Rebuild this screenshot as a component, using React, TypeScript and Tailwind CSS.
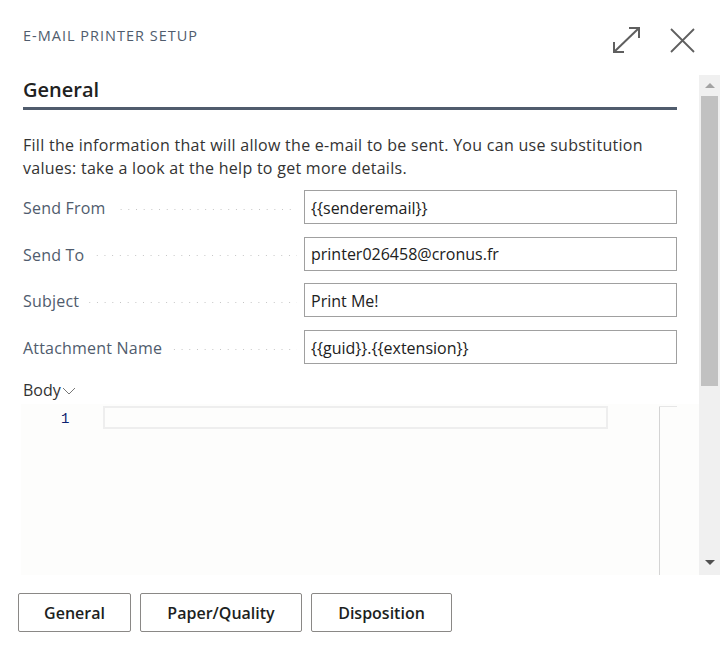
import React from "react";

const fields = [
  { label: "Send From", value: "{{senderemail}}" },
  { label: "Send To", value: "printer026458@cronus.fr" },
  { label: "Subject", value: "Print Me!" },
  { label: "Attachment Name", value: "{{guid}}.{{extension}}" },
];

export default function App() {
  return (
    <div
      className="w-[720px] h-[650px] bg-white overflow-hidden flex flex-col text-[#212121]"
      style={{ fontFamily: '"Open Sans", "Noto Sans", sans-serif' }}
    >
      {/* Header */}
      <div className="h-[75px] shrink-0 flex items-start pl-[23px] pr-[25px]">
        <div className="mt-[26px] text-[14.5px] leading-[20px] tracking-[1px] text-[#505c6d] uppercase">
          E-mail Printer Setup
        </div>
        <div className="ml-auto mt-[26px] flex items-start gap-[29px]">
          <svg width="29" height="28" viewBox="0 0 29 28" fill="none" stroke="#5f5f5f" strokeWidth="2">
            <path d="M2 26 L27 2" />
            <path d="M17 2 H27 V12" />
            <path d="M2 16 V26 H12" />
          </svg>
          <svg width="25" height="25" viewBox="0 0 25 25" fill="none" stroke="#5f5f5f" strokeWidth="1.8" className="mt-[2px]">
            <path d="M1 1 L24 24 M24 1 L1 24" />
          </svg>
        </div>
      </div>

      {/* Scroll area */}
      <div className="h-[500px] shrink-0 flex">
        <div className="flex-1 flex flex-col pl-[23px] pr-[22px] min-w-0">
          <div className="pt-[1px] h-[29px] text-[20px] leading-[28px] font-semibold text-[#212121]">General</div>
          <div className="mt-[3px] h-[3px] bg-[#505c6d]" />
          <p className="mt-[24px] text-[16px] leading-[23px] tracking-[0.28px] text-[#333333]">
            Fill the information that will allow the e-mail to be sent. You can use substitution
            <br />
            values: take a look at the help to get more details.
          </p>
          <div className="mt-[10px] flex flex-col gap-[12.7px]">
            {fields.map((f) => (
              <div key={f.label} className="flex items-center h-[34px]">
                <span className="pt-[2px] text-[16px] tracking-[0.2px] text-[#505c6d] whitespace-nowrap">{f.label}</span>
                <span className="flex-1 ml-[10px] mr-[7px] mt-[4px] h-[1px] bg-[linear-gradient(to_right,#c4c4c4_1px,transparent_1px)] bg-[length:7.7px_1px] bg-repeat-x bg-right" />
                <div className="w-[373px] h-[34px] border border-[#a0a0a0] flex items-center px-[6px] pt-[1px] text-[16px] text-[#212121] whitespace-nowrap">
                  {f.value}
                </div>
              </div>
            ))}
          </div>
          <div className="mt-[14px] h-[22px] flex items-center text-[16px] text-[#333333]">
            <span className="pt-[1px]">Body</span>
            <svg width="14" height="8" viewBox="0 0 14 8" fill="none" stroke="#777" strokeWidth="1" className="ml-[1px] mt-[3px]">
              <path d="M1 1 L7 7 L13 1" />
            </svg>
          </div>
          <div className="mt-[4px] -ml-[2px] -mr-[22px] flex-1 bg-[#fdfdfc] relative">
            <div
              className="absolute left-[40px] top-[6px] text-[14px] leading-[18px] text-[#0b216f]"
              style={{ fontFamily: '"Liberation Mono", "DejaVu Sans Mono", monospace' }}
            >
              1
            </div>
            <div className="absolute left-[82px] top-[2px] w-[505px] h-[23px] border-2 border-[#eeeeee]" />
            <div className="absolute left-[638px] top-[2px] bottom-0 w-[1px] bg-[#d4d4d4]" />
            <div className="absolute left-[638px] top-[2px] w-[18px] h-[1px] bg-[#e6e6e6]" />
          </div>
        </div>
        {/* Scrollbar */}
        <div className="w-[21px] bg-[#f0f0f0] flex flex-col items-center">
          <div className="h-[21px] flex items-center justify-center">
            <div className="w-0 h-0 border-l-[5px] border-r-[5px] border-b-[5px] border-l-transparent border-r-transparent border-b-[#a3a3a3]" />
          </div>
          <div className="w-[17px] h-[290px] bg-[#c1c1c1]" />
          <div className="flex-1" />
          <div className="h-[24px] flex items-center justify-center pb-[2px]">
            <div className="w-0 h-0 border-l-[5px] border-r-[5px] border-t-[5px] border-l-transparent border-r-transparent border-t-[#505050]" />
          </div>
        </div>
      </div>

      {/* Footer */}
      <div className="flex gap-[9px] pl-[18px] pt-[18px]">
        {["General", "Paper/Quality", "Disposition"].map((b, i) => (
          <button
            key={b}
            className={`h-[39px] border border-[#8a8886] rounded-[2px] bg-white text-[16px] font-semibold text-[#201f1e] ${
              i === 0 ? "w-[113px]" : i === 1 ? "w-[162px]" : "w-[141px]"
            }`}
          >
            {b}
          </button>
        ))}
      </div>
    </div>
  );
}
